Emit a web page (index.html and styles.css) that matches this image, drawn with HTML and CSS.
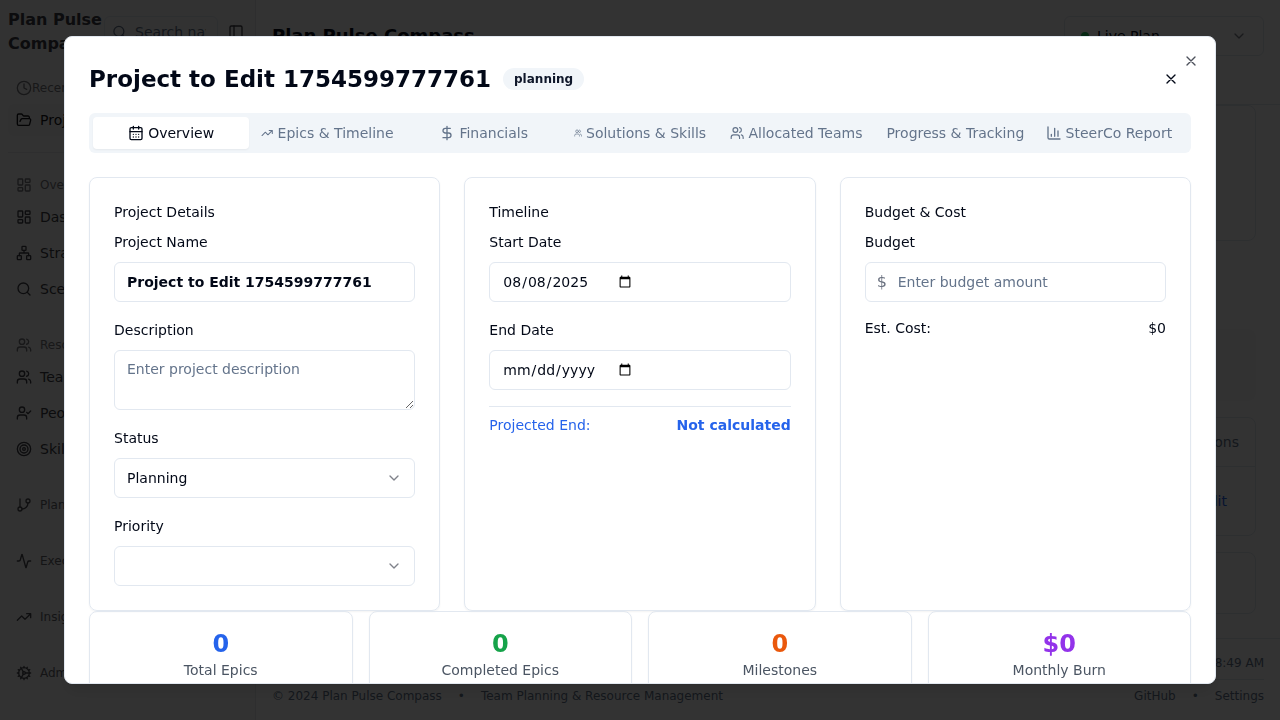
FILE: index.html
```html
<!DOCTYPE html>
<html lang="en">
<head>
<meta charset="utf-8">
<title>Plan Pulse Compass</title>
<meta name="viewport" content="width=device-width, initial-scale=1">
<link rel="stylesheet" href="styles.css">
</head>
<body>
<svg class="sprite" aria-hidden="true">
  <symbol id="search" viewBox="0 0 24 24"><circle cx="11" cy="11" r="8"/><path d="m21 21-4.3-4.3"/></symbol>
  <symbol id="panel" viewBox="0 0 24 24"><rect width="18" height="18" x="3" y="3" rx="2"/><path d="M9 3v18"/></symbol>
  <symbol id="clock" viewBox="0 0 24 24"><circle cx="12" cy="12" r="10"/><path d="M12 6v6l4 2"/></symbol>
  <symbol id="folder" viewBox="0 0 24 24"><path d="m6 14 1.5-2.9A2 2 0 0 1 9.24 10H20a2 2 0 0 1 1.94 2.5l-1.54 6a2 2 0 0 1-1.95 1.5H4a2 2 0 0 1-2-2V5a2 2 0 0 1 2-2h3.9a2 2 0 0 1 1.69.9l.81 1.2a2 2 0 0 0 1.67.9H18a2 2 0 0 1 2 2v2"/></symbol>
  <symbol id="dashboard" viewBox="0 0 24 24"><rect width="7" height="9" x="3" y="3" rx="1"/><rect width="7" height="5" x="14" y="3" rx="1"/><rect width="7" height="9" x="14" y="12" rx="1"/><rect width="7" height="5" x="3" y="16" rx="1"/></symbol>
  <symbol id="network" viewBox="0 0 24 24"><rect x="16" y="16" width="6" height="6" rx="1"/><rect x="2" y="16" width="6" height="6" rx="1"/><rect x="9" y="2" width="6" height="6" rx="1"/><path d="M5 16v-3a1 1 0 0 1 1-1h12a1 1 0 0 1 1 1v3M12 12V8"/></symbol>
  <symbol id="users" viewBox="0 0 24 24"><path d="M16 21v-2a4 4 0 0 0-4-4H6a4 4 0 0 0-4 4v2"/><circle cx="9" cy="7" r="4"/><path d="M22 21v-2a4 4 0 0 0-3-3.87M16 3.13a4 4 0 0 1 0 7.75"/></symbol>
  <symbol id="user-check" viewBox="0 0 24 24"><path d="M16 21v-2a4 4 0 0 0-4-4H6a4 4 0 0 0-4 4v2"/><circle cx="9" cy="7" r="4"/><path d="m16 11 2 2 4-4"/></symbol>
  <symbol id="target" viewBox="0 0 24 24"><circle cx="12" cy="12" r="10"/><circle cx="12" cy="12" r="6"/><circle cx="12" cy="12" r="2"/></symbol>
  <symbol id="branch" viewBox="0 0 24 24"><path d="M6 3v12"/><circle cx="18" cy="6" r="3"/><circle cx="6" cy="18" r="3"/><path d="M18 9a9 9 0 0 1-9 9"/></symbol>
  <symbol id="activity" viewBox="0 0 24 24"><path d="M22 12h-2.48a2 2 0 0 0-1.93 1.46l-2.35 8.36a.25.25 0 0 1-.48 0L9.24 2.18a.25.25 0 0 0-.48 0l-2.35 8.36A2 2 0 0 1 4.49 12H2"/></symbol>
  <symbol id="trending" viewBox="0 0 24 24"><path d="m22 7-8.5 8.5-5-5L2 17M16 7h6v6"/></symbol>
  <symbol id="cog" viewBox="0 0 24 24"><path d="M12 20a8 8 0 1 0 0-16 8 8 0 0 0 0 16Z"/><path d="M12 14a2 2 0 1 0 0-4 2 2 0 0 0 0 4Z"/><path d="M12 2v2M12 22v-2M17 20.66l-1-1.73M11 10.27 7 3.34M20.66 17l-1.73-1M3.34 7l1.73 1M14 12h8M2 12h2M20.66 7l-1.73 1M3.34 17l1.73-1M17 3.34l-1 1.73M11 13.73l-4 6.93"/></symbol>
  <symbol id="chevron" viewBox="0 0 24 24"><path d="m6 9 6 6 6-6"/></symbol>
  <symbol id="close" viewBox="0 0 24 24"><path d="M18 6 6 18M6 6l12 12"/></symbol>
  <symbol id="calendar" viewBox="0 0 24 24"><path d="M8 2v4M16 2v4"/><rect width="18" height="18" x="3" y="4" rx="2"/><path d="M3 10h18M8 14h.01M12 14h.01M16 14h.01M8 18h.01M12 18h.01M16 18h.01"/></symbol>
  <symbol id="dollar" viewBox="0 0 24 24"><path d="M12 2v20M17 5H9.5a3.5 3.5 0 0 0 0 7h5a3.5 3.5 0 0 1 0 7H6"/></symbol>
  <symbol id="chart" viewBox="0 0 24 24"><path d="M3 3v16a2 2 0 0 0 2 2h16M18 17V9M13 17V5M8 17v-3"/></symbol>
</svg>

<div class="app">
  <aside class="sidebar">
    <header class="brand">
      <strong class="brand-name">Plan Pulse Compass</strong>
      <div class="nav-search">
        <svg class="icon"><use href="#search"/></svg>
        <input type="text" aria-label="Search navigation" placeholder="Search navigation">
      </div>
      <button class="toggle" aria-label="Toggle sidebar"><svg class="icon"><use href="#panel"/></svg></button>
    </header>
    <nav class="nav">
      <section>
        <h2 class="group recent"><svg class="icon"><use href="#clock"/></svg>Recent</h2>
        <a class="item current" href="#"><svg class="icon"><use href="#folder"/></svg>Projects</a>
      </section>
      <hr>
      <section>
        <h2 class="group"><svg class="icon"><use href="#dashboard"/></svg>Overview</h2>
        <a class="item" href="#"><svg class="icon"><use href="#dashboard"/></svg>Dashboard</a>
        <a class="item" href="#"><svg class="icon"><use href="#network"/></svg>Strategy</a>
        <a class="item" href="#"><svg class="icon"><use href="#search"/></svg>Scenarios</a>
      </section>
      <section>
        <h2 class="group"><svg class="icon"><use href="#users"/></svg>Resources</h2>
        <a class="item" href="#"><svg class="icon"><use href="#users"/></svg>Teams</a>
        <a class="item" href="#"><svg class="icon"><use href="#user-check"/></svg>People</a>
        <a class="item" href="#"><svg class="icon"><use href="#target"/></svg>Skills</a>
      </section>
      <h2 class="group closed"><svg class="icon"><use href="#branch"/></svg>Planning</h2>
      <h2 class="group closed"><svg class="icon"><use href="#activity"/></svg>Execution</h2>
      <h2 class="group closed"><svg class="icon"><use href="#trending"/></svg>Insights</h2>
      <h2 class="group closed"><svg class="icon"><use href="#cog"/></svg>Administration</h2>
    </nav>
  </aside>

  <div class="page">
    <header class="page-head">
      <h1>Plan Pulse Compass</h1>
      <button class="plan"><span class="dot"></span>Live Plan<svg class="icon"><use href="#chevron"/></svg></button>
    </header>
    <main class="content">
      <div class="panel intro"></div>
      <div class="filters"></div>
      <div class="panel">
        <table class="projects">
          <thead><tr><th>Actions</th></tr></thead>
          <tbody><tr><td><a href="#">Edit</a></td></tr></tbody>
        </table>
      </div>
      <div class="panel pager"></div>
    </main>
    <footer class="foot">
      <div class="foot-time">8:49 AM</div>
      <div class="foot-row">
        <span>© 2024 Plan Pulse Compass</span><span>•</span><span>Team Planning &amp; Resource Management</span>
        <a class="push" href="#">GitHub</a><span>•</span><a href="#">Settings</a>
      </div>
    </footer>
  </div>
</div>

<div class="overlay">
  <div class="dialog" role="dialog" aria-modal="true" aria-labelledby="dialog-title">
    <button class="dialog-close" aria-label="Close dialog"><svg class="icon"><use href="#close"/></svg></button>
    <header class="dialog-head">
      <h2 id="dialog-title">Project to Edit 1754599777761</h2>
      <span class="badge">planning</span>
      <button class="cancel" aria-label="Cancel editing"><svg class="icon"><use href="#close"/></svg></button>
    </header>

    <div class="tabs" role="tablist">
      <button class="tab active" role="tab" aria-selected="true"><svg class="icon"><use href="#calendar"/></svg>Overview</button>
      <button class="tab" role="tab"><svg class="icon"><use href="#trending"/></svg>Epics &amp; Timeline</button>
      <button class="tab" role="tab"><svg class="icon"><use href="#dollar"/></svg>Financials</button>
      <button class="tab" role="tab"><svg class="icon"><use href="#users"/></svg>Solutions &amp; Skills</button>
      <button class="tab" role="tab"><svg class="icon"><use href="#users"/></svg>Allocated Teams</button>
      <button class="tab" role="tab">Progress &amp; Tracking</button>
      <button class="tab" role="tab"><svg class="icon"><use href="#chart"/></svg>SteerCo Report</button>
    </div>

    <div class="cards">
      <section class="card">
        <h3>Project Details</h3>
        <div class="fields">
          <div class="field">
            <label for="name">Project Name</label>
            <input class="control name" id="name" type="text" value="Project to Edit 1754599777761">
          </div>
          <div class="field">
            <label for="description">Description</label>
            <textarea class="control" id="description" placeholder="Enter project description"></textarea>
          </div>
          <div class="field">
            <label for="status">Status</label>
            <div class="select">
              <select class="control" id="status"><option>Planning</option></select>
              <svg class="icon"><use href="#chevron"/></svg>
            </div>
          </div>
          <div class="field">
            <label for="priority">Priority</label>
            <div class="select">
              <select class="control" id="priority"><option></option></select>
              <svg class="icon"><use href="#chevron"/></svg>
            </div>
          </div>
        </div>
      </section>

      <section class="card">
        <h3>Timeline</h3>
        <div class="fields">
          <div class="field">
            <label for="start">Start Date</label>
            <input class="control date" id="start" type="date" value="2025-08-08">
          </div>
          <div class="field">
            <label for="end">End Date</label>
            <input class="control date" id="end" type="date">
          </div>
          <div class="line projected"><span>Projected End:</span><strong>Not calculated</strong></div>
        </div>
      </section>

      <section class="card">
        <h3>Budget &amp; Cost</h3>
        <div class="fields">
          <div class="field">
            <label for="budget">Budget</label>
            <div class="money">
              <span class="currency">$</span>
              <input class="control" id="budget" type="text" placeholder="Enter budget amount">
            </div>
          </div>
          <div class="line"><span>Est. Cost:</span><span>$0</span></div>
        </div>
      </section>
    </div>

    <div class="stats">
      <div class="stat"><strong class="blue">0</strong><span>Total Epics</span></div>
      <div class="stat"><strong class="green">0</strong><span>Completed Epics</span></div>
      <div class="stat"><strong class="orange">0</strong><span>Milestones</span></div>
      <div class="stat"><strong class="purple">$0</strong><span>Monthly Burn</span></div>
    </div>
  </div>
</div>
</body>
</html>
```

FILE: styles.css
```css
* { box-sizing: border-box; }

body {
  margin: 0;
  font: 14px/20px "DejaVu Sans", sans-serif;
  color: #020817;
  background: #fff;
  overflow: hidden;
}

h1, h2, h3 { margin: 0; }
a { color: inherit; text-decoration: none; }
button, input, select, textarea { font: inherit; color: inherit; }
button { border: 0; background: none; padding: 0; }

.sprite { position: absolute; width: 0; height: 0; }
.icon {
  width: 16px;
  height: 16px;
  fill: none;
  stroke: currentColor;
  stroke-width: 2;
  stroke-linecap: round;
  stroke-linejoin: round;
}

/* Application behind the dialog */
.app { display: flex; height: 100vh; }

.sidebar {
  flex: 0 0 256px;
  background: #fafafa;
  border-right: 1px solid #e5e7eb;
  color: #3f3f46;
  overflow: hidden;
}
.brand { display: flex; align-items: center; height: 64px; padding: 0 8px; }
.brand-name { flex: 0 0 96px; font-size: 16px; line-height: 24px; }
.nav-search {
  display: flex;
  align-items: center;
  gap: 8px;
  width: 114px;
  height: 32px;
  padding: 0 11px 0 7px;
  border: 1px solid #e2e8f0;
  border-radius: 6px;
  color: #64748b;
}
.nav-search .icon { flex: none; width: 15px; }
.nav-search input {
  min-width: 0;
  width: 100%;
  padding: 0;
  border: 0;
  background: none;
}
.nav-search input::placeholder { color: #64748b; }
.toggle { display: flex; margin-left: 10px; }

.nav { padding: 8px; }
.nav section { display: flex; flex-direction: column; gap: 4px; margin-bottom: 24px; }
.nav section:first-child { margin-bottom: 16px; }
.nav hr { margin: 0 0 16px; border: 0; border-top: 1px solid #e5e7eb; }
.group {
  display: flex;
  align-items: center;
  gap: 8px;
  height: 32px;
  padding: 0 8px;
  font-size: 12px;
  font-weight: 400;
  color: #77777c;
}
.nav section .group { margin-bottom: -4px; }
.recent { gap: 0; }
.closed { margin-bottom: 24px; color: #65656b; }
.closed .icon { color: #4b4b52; }
.item {
  display: flex;
  align-items: center;
  gap: 8px;
  height: 32px;
  padding: 0 8px;
  border-radius: 6px;
}
.current { background: #f4f4f5; color: #18181b; }

.page { flex: 1; min-width: 0; display: flex; flex-direction: column; }
.page-head {
  display: flex;
  align-items: flex-start;
  justify-content: space-between;
  height: 105px;
  padding: 16px;
  border-bottom: 1px solid #e2e8f0;
}
.page-head h1 { font-size: 18px; line-height: 40px; }
.plan {
  display: flex;
  align-items: center;
  gap: 8px;
  width: 200px;
  height: 40px;
  padding: 0 16px;
  border: 1px solid #e2e8f0;
  border-radius: 6px;
}
.plan .icon { margin-left: auto; opacity: .5; }
.dot { width: 8px; height: 8px; border-radius: 50%; background: #22c55e; }

.content { flex: 1; padding: 0 24px; }
.panel { border: 1px solid #e2e8f0; border-radius: 8px; margin-bottom: 16px; }
.intro { height: 136px; margin-bottom: 88px; }
.filters { height: 72px; margin-bottom: 16px; border-radius: 8px; background: #f9fafb; }
.projects { width: 100%; border-collapse: collapse; text-align: right; }
.projects th {
  height: 48px;
  padding: 0 16px;
  border-bottom: 1px solid #e2e8f0;
  font-weight: 400;
  color: #64748b;
}
.projects td { height: 69px; padding: 0 28px; color: #2563eb; }
.pager { height: 62px; }

.foot {
  padding: 14px 16px;
  border-top: 1px solid #e2e8f0;
  font-size: 12px;
  color: #64748b;
}
.foot-time { padding-bottom: 6px; border-bottom: 1px solid #e2e8f0; text-align: right; }
.foot-row { display: flex; gap: 16px; padding-top: 6px; }
.push { margin-left: auto; }

/* Dialog */
.overlay {
  position: fixed;
  inset: 0;
  display: flex;
  align-items: center;
  justify-content: center;
  background: rgba(0, 0, 0, .8);
}
.dialog {
  position: relative;
  width: 90vw;
  height: 90vh;
  padding: 24px;
  overflow: hidden;
  border: 1px solid #e2e8f0;
  border-radius: 8px;
  background: #fff;
  box-shadow: 0 10px 15px -3px rgba(0, 0, 0, .1), 0 4px 6px -4px rgba(0, 0, 0, .1);
}
.dialog-close { position: absolute; top: 16px; right: 16px; display: flex; opacity: .7; }
.dialog-head { display: flex; align-items: center; gap: 12px; margin-bottom: 16px; }
.dialog-head h2 { font-size: 23px; line-height: 32px; }
.badge {
  padding: 1px 11px;
  border-radius: 11px;
  background: #f1f5f9;
  color: #0f172a;
  font-size: 12px;
  font-weight: 700;
}
.cancel { display: flex; margin-left: auto; padding: 10px 12px; }

.tabs {
  display: grid;
  grid-template-columns: repeat(7, minmax(0, 1fr));
  height: 40px;
  margin-bottom: 24px;
  padding: 4px;
  border-radius: 6px;
  background: #f1f5f9;
  color: #64748b;
}
.tab {
  display: flex;
  align-items: center;
  justify-content: safe center;
  gap: 4px;
  padding: 0 12px;
  border-radius: 4px;
  white-space: nowrap;
}
.tab.active { background: #fff; color: #020817; box-shadow: 0 1px 2px rgba(0, 0, 0, .05); }

.cards { display: grid; grid-template-columns: repeat(3, minmax(0, 1fr)); gap: 24px; }
.card, .stat {
  border: 1px solid #e2e8f0;
  border-radius: 8px;
  box-shadow: 0 1px 2px rgba(0, 0, 0, .05);
}
.card { padding: 24px; }
.card h3 { margin-bottom: 8px; font-size: 14px; font-weight: 400; }
.fields { display: flex; flex-direction: column; gap: 16px; }
.field { display: flex; flex-direction: column; gap: 8px; }
.field label { line-height: 24px; }
.control {
  display: block;
  width: 100%;
  height: 40px;
  padding: 8px 12px;
  border: 1px solid #e2e8f0;
  border-radius: 6px;
  background: #fff;
}
.control::placeholder { color: #64748b; }
.name { font-weight: 700; }
.date { display: flex; }
textarea.control { height: 60px; resize: vertical; }
.select, .money { position: relative; }
.select select { appearance: none; }
.select .icon { position: absolute; top: 12px; right: 13px; opacity: .5; pointer-events: none; }
.currency { position: absolute; top: 10px; left: 12px; font-size: 16px; color: #6b7280; }
.money .control { padding-left: 32px; }
.line { display: flex; justify-content: space-between; }
.projected { padding-top: 8px; border-top: 1px solid #e2e8f0; color: #2563eb; }

.stats { display: grid; grid-template-columns: repeat(4, minmax(0, 1fr)); gap: 16px; }
.stat { display: flex; flex-direction: column; padding: 16px; text-align: center; color: #4b5563; }
.stat strong { font-size: 24px; line-height: 32px; }
.stat .blue { color: #2563eb; }
.stat .green { color: #16a34a; }
.stat .orange { color: #ea580c; }
.stat .purple { color: #9333ea; }
```
